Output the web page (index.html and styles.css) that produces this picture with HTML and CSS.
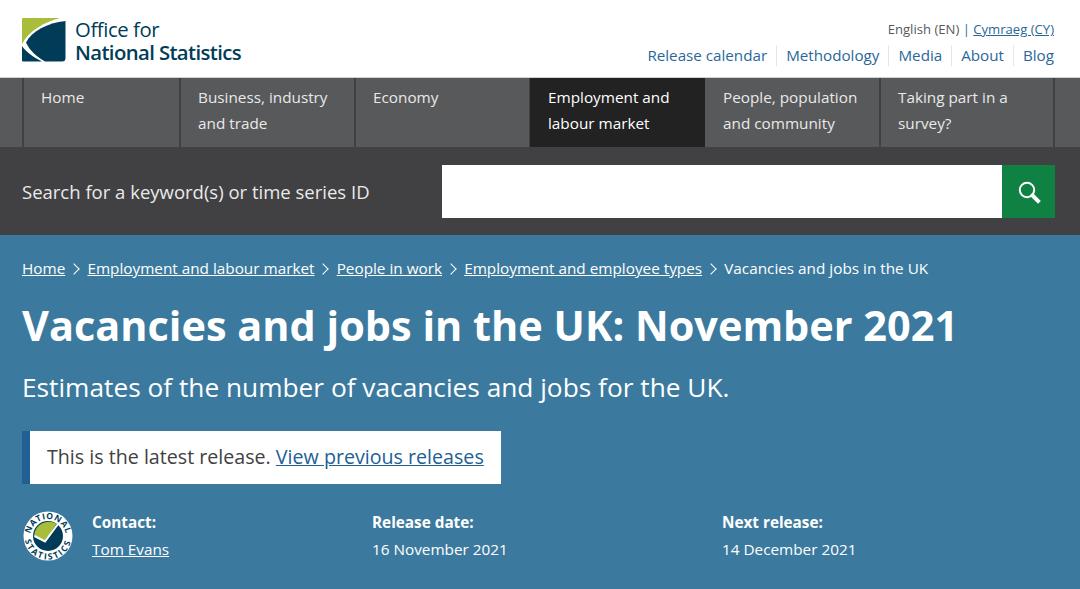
FILE: index.html
```html
<!DOCTYPE html>
<html lang="en">
<head>
<meta charset="utf-8">
<title>Vacancies and jobs in the UK: November 2021</title>
<link rel="stylesheet" href="styles.css">
</head>
<body>
<header class="masthead wrap">
  <a class="brand" href="#">
    <svg class="brand-mark" viewBox="0 0 44 44" aria-hidden="true">
      <path d="M0 1Q0 0 1 0H38C22 4 7 13 0 26Z" fill="#a8bd3a"/>
      <path d="M43.500 3C25 5 10 13 4 24.500C8 33 15 39 23 43.500H40Q43.500 43.500 43.500 40Z" fill="#003c57"/>
      <path d="M0 28C4 34 11 39 20 43.500H1Q0 43.500 0 42.500Z" fill="#003c57"/>
    </svg>
    <span class="brand-text"><span class="brand-top">Office for</span><strong class="brand-bottom">National Statistics</strong></span>
  </a>
  <div class="utility">
    <p class="lang">English (EN) <span class="pipe">|</span> <a href="#">Cymraeg (CY)</a></p>
    <nav class="util-links">
      <a href="#">Release calendar</a><a href="#">Methodology</a><a href="#">Media</a><a href="#">About</a><a href="#">Blog</a>
    </nav>
  </div>
</header>
<nav class="primary">
  <div class="wrap primary-row">
    <a class="tab tab-home" href="#">Home</a>
    <a class="tab" href="#">Business, industry and trade</a>
    <a class="tab" href="#">Economy</a>
    <a class="tab tab-active" href="#">Employment and labour market</a>
    <a class="tab" href="#">People, population and community</a>
    <a class="tab" href="#">Taking part in a survey?</a>
  </div>
</nav>
<section class="search">
  <form class="wrap search-row">
    <label class="search-label" for="q">Search for a keyword(s) or time series ID</label>
    <div class="search-box">
      <input class="search-input" id="q" type="text">
      <button class="search-btn" type="button" aria-label="Search">
        <svg viewBox="0 0 24 24" width="24" height="24" aria-hidden="true">
          <circle cx="10" cy="10" r="7.200" fill="none" stroke="#fff" stroke-width="2"/>
          <path d="M15.500 15.500L21 21" stroke="#fff" stroke-width="4" stroke-linecap="square"/>
        </svg>
      </button>
    </div>
  </form>
</section>
<main class="hero">
  <div class="wrap">
    <ol class="crumbs">
      <li><a href="#">Home</a></li>
      <li><a href="#">Employment and labour market</a></li>
      <li><a href="#">People in work</a></li>
      <li><a href="#">Employment and employee types</a></li>
      <li>Vacancies and jobs in the UK</li>
    </ol>
    <h1 class="title">Vacancies and jobs in the UK: November 2021</h1>
    <p class="subtitle">Estimates of the number of vacancies and jobs for the UK.</p>
    <p class="notice">This is the latest release. <a href="#">View previous releases</a></p>
    <div class="meta">
      <svg class="badge" viewBox="0 0 50 50" role="img" aria-label="National Statistics">
        <circle cx="25" cy="25" r="24.500" fill="#fff"/>
        <defs>
          <path id="arcTop" d="M8 32A18 18 0 1 1 42 32"/>
          <path id="arcBottom" d="M1.500 25A23.500 23.500 0 0 0 48.500 25"/>
        </defs>
        <text class="badge-text"><textPath href="#arcTop" startOffset="50%" text-anchor="middle">NATIONAL</textPath></text>
        <text class="badge-text badge-low"><textPath href="#arcBottom" startOffset="50%" text-anchor="middle">STATISTICS</textPath></text>
        <circle cx="25" cy="25" r="15" fill="#003c57"/>
        <path d="M11 25L22 31L33.500 12.700A15 15 0 0 0 11 25Z" fill="#a8bd3a"/>
        <path d="M11.500 25L22 30.500L35 13" fill="none" stroke="#fff" stroke-width="2"/>
      </svg>
      <div class="meta-col meta-contact">
        <strong>Contact:</strong>
        <a href="#">Tom Evans</a>
      </div>
      <div class="meta-col">
        <strong>Release date:</strong>
        <span>16 November 2021</span>
      </div>
      <div class="meta-col">
        <strong>Next release:</strong>
        <span>14 December 2021</span>
      </div>
    </div>
  </div>
</main>
</body>
</html>
```
FILE: styles.css
```css
* { box-sizing: border-box; }
html, body { margin: 0; padding: 0; }
body {
  font-family: "Open Sans", "Noto Sans", sans-serif;
  font-size: 15.300px;
  line-height: 26px;
  color: #414042;
  background: #3b7a9e;
  height: 589px;
  overflow: hidden;
}
a { color: inherit; }
.wrap { width: 1034px; margin-left: 22px; }

.masthead {
  display: flex;
  justify-content: space-between;
  height: 77px;
  background: #fff;
  width: auto;
  margin: 0;
  padding: 0 26px 0 22px;
}
.brand { display: flex; align-items: flex-start; gap: 9px; padding-top: 18px; text-decoration: none; color: #003c57; }
.brand-mark { width: 44px; height: 44px; display: block; }
.brand-text { display: flex; flex-direction: column; font-size: 20.300px; line-height: 23px; }
.brand-top { font-weight: 400; letter-spacing: -0.4px; }
.brand-bottom { font-weight: 600; letter-spacing: -0.6px; }
.utility { display: flex; flex-direction: column; align-items: flex-end; padding-top: 17px; }
.lang { margin: 0; font-size: 13.100px; line-height: 24px; color: #58595b; }
.lang a { color: #2a6799; }
.pipe { color: #2a6799; }
.util-links { display: flex; color: #2a6799; font-size: 15.200px; line-height: 21px; margin-top: 4px; }
.util-links a { text-decoration: none; padding: 0 9px; border-left: 1px solid #e6e6e6; }
.util-links a:first-child { border-left: 0; }
.util-links a:last-child { padding-right: 0; }

.primary { background: #58595b; border-top: 1px solid #d0d0d0; }
.primary-row { display: flex; height: 69px; border-left: 2px solid #414042; width: 1033px; border-right: 2px solid #414042; }
.tab {
  flex: none;
  width: 175px;
  padding: 6px 17px 0;
  color: #e9e9e9;
  text-decoration: none;
  border-right: 2px solid #414042;
}
.tab:last-child { border-right: 0; width: 172px; }
.tab-home { width: 157px; }
.tab-active { width: 174px; margin-right: 1px; background: #222; color: #fff; border-right: 0; box-shadow: -1px 0 0 #222; }

.search { background: #414042; height: 88px; }
.search-row { display: flex; align-items: flex-start; padding-top: 18px; height: 88px; width: 1033px; }
.search-label { width: 420px; color: #e9eaea; font-size: 18.500px; line-height: 53px; }
.search-box { display: flex; flex: 1; height: 53px; }
.search-input { flex: 1; min-width: 0; border: 0; border-radius: 0; background: #fff; }
.search-btn { width: 53px; border: 0; padding: 0; background: #0f8243; display: flex; align-items: center; justify-content: center; }

.hero { color: #fff; }
.crumbs { display: flex; margin: 0; padding: 21px 0 0; list-style: none; line-height: 25px; }
.crumbs li { display: flex; align-items: center; }
.crumbs li + li::before {
  content: "";
  width: 7px;
  height: 7px;
  margin: 0 9.200px 0 5px;
  border-top: 1px solid #fff;
  border-right: 1px solid #fff;
  transform: rotate(45deg);
}
.title { margin: 17px 0 0; font-size: 41.450px; line-height: 55px; font-weight: 700; }
.subtitle { margin: 16px 0 0; font-size: 26.270px; line-height: 36px; }
.notice {
  display: inline-block;
  margin: 26px 0 0;
  padding: 0 17px 0 17px;
  height: 53px;
  font-size: 19.650px;
  line-height: 52px;
  background: #fff;
  color: #414042;
  border-left: 8px solid #206095;
}
.notice a { color: #206095; }
.meta { display: flex; margin-top: 25px; line-height: 27px; }
.badge { width: 50px; height: 50px; margin: 2px 0 0 1px; flex: none; }
.badge-text { font-family: "Open Sans", sans-serif; font-size: 8.500px; font-weight: 700; fill: #003c57; letter-spacing: 0.6px; }
.badge-low { letter-spacing: 1.900px; }
.meta-col { display: flex; flex-direction: column; width: 350px; flex: none; align-items: flex-start; }
.meta-col strong { font-weight: 700; }
.meta-contact { width: 280px; margin-left: 19px; }
```
